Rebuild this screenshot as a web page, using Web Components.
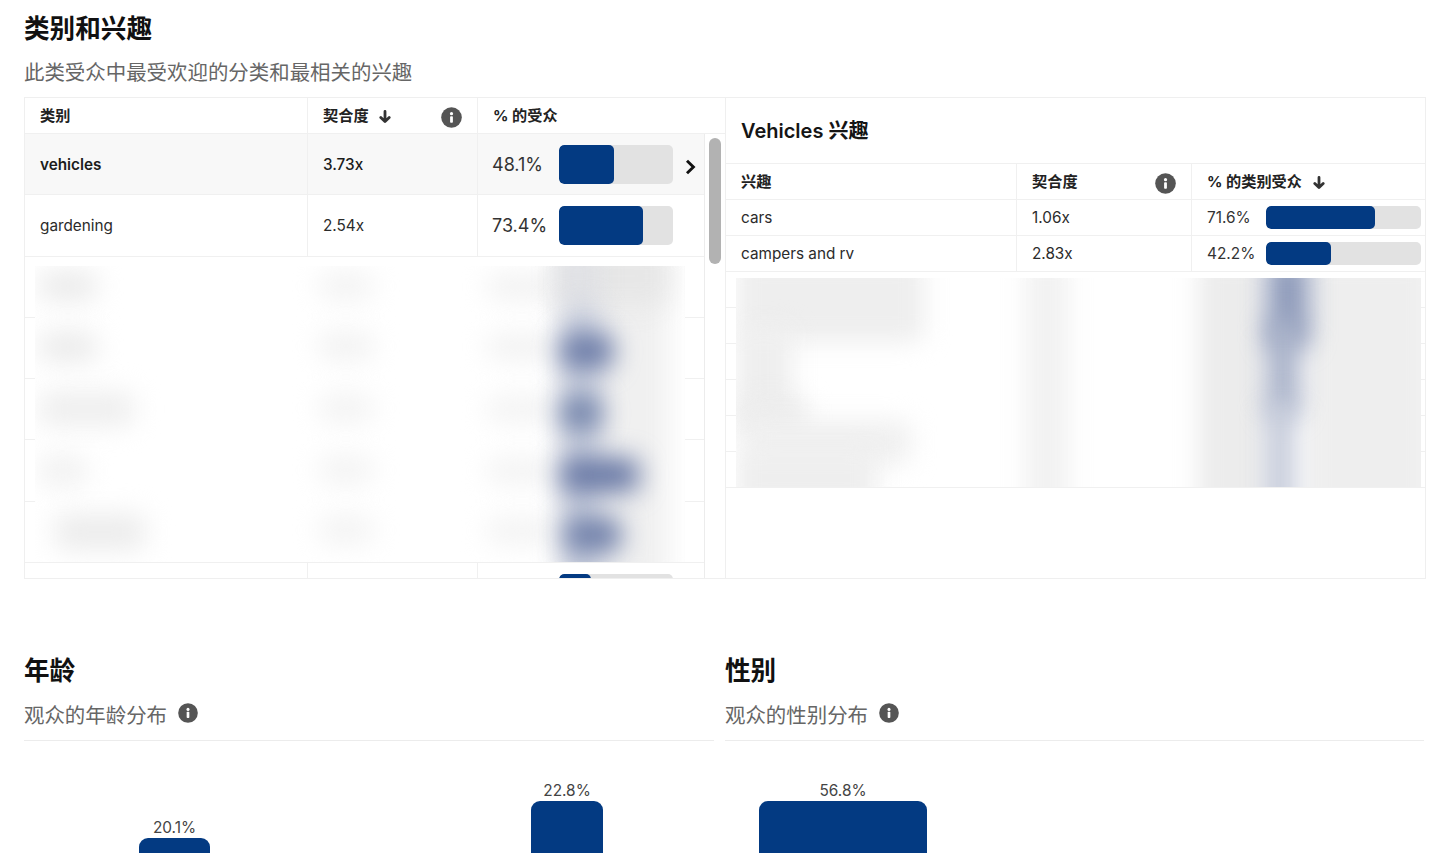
<!DOCTYPE html>
<html lang="zh-CN">
<head>
<meta charset="utf-8">
<title>类别和兴趣</title>
<style>
html,body{margin:0;padding:0;background:#fff;height:853px;overflow:hidden;font-family:Inter,"Noto Sans CJK SC",sans-serif;color:#222}
</style>
</head>
<body>
<audience-page>
  <section-head slot="top" heading="类别和兴趣" sub="此类受众中最受欢迎的分类和最相关的兴趣"></section-head>
  <split-card slot="top">
    <data-panel slot="left" style="--cols:283px 170px 1fr">
      <table-row head><table-cell>类别</table-cell><table-cell>契合度 <sort-arrow></sort-arrow><info-icon end></info-icon></table-cell><table-cell>% 的受众</table-cell></table-row>
      <table-row tall selected><table-cell strong>vehicles</table-cell><table-cell medium>3.73x</table-cell><table-cell tight><bar-meter large value="48.1%" pct="48.1"></bar-meter><chevron-mark></chevron-mark></table-cell></table-row>
      <table-row tall><table-cell>gardening</table-cell><table-cell>2.54x</table-cell><table-cell tight><bar-meter large value="73.4%" pct="73.4"></bar-meter></table-cell></table-row>
      <table-row tall></table-row><table-row tall></table-row><table-row tall></table-row><table-row tall></table-row><table-row tall></table-row>
      <table-row tall><table-cell></table-cell><table-cell></table-cell><table-cell tight><bar-meter large value="" pct="28"></bar-meter></table-cell></table-row>
    </data-panel>
    <blur-mask slot="left" kind="left"></blur-mask>
    <data-panel slot="right" titled="Vehicles 兴趣" style="--cols:291px 175px 1fr">
      <table-row head><table-cell>兴趣</table-cell><table-cell>契合度<info-icon end></info-icon></table-cell><table-cell>% 的类别受众 <sort-arrow></sort-arrow></table-cell></table-row>
      <table-row><table-cell>cars</table-cell><table-cell>1.06x</table-cell><table-cell><bar-meter value="71.6%" pct="70.3"></bar-meter></table-cell></table-row>
      <table-row><table-cell>campers and rv</table-cell><table-cell>2.83x</table-cell><table-cell><bar-meter value="42.2%" pct="42"></bar-meter></table-cell></table-row>
      <table-row></table-row><table-row></table-row><table-row></table-row><table-row></table-row><table-row></table-row><table-row></table-row>
    </data-panel>
    <blur-mask slot="right" kind="right"></blur-mask>
  </split-card>
  <chart-section slot="left" heading="年龄" sub="观众的年龄分布" pad="115" gap="321">
    <chart-bar value="20.1%" w="71" h="15"></chart-bar>
    <chart-bar value="22.8%" w="72" h="52"></chart-bar>
  </chart-section>
  <chart-section slot="right" heading="性别" sub="观众的性别分布" pad="34" gap="0">
    <chart-bar value="56.8%" w="168" h="52"></chart-bar>
  </chart-section>
</audience-page>
<script>
const def=(n,css,html)=>{customElements.define(n,class extends HTMLElement{
  constructor(){super();const r=this.attachShadow({mode:'open'});r.innerHTML=`<style>${css}</style>${typeof html==='function'?'':html}`;}
  connectedCallback(){if(typeof html==='function'){const d=document.createElement('div');d.style.display='contents';d.innerHTML=html(this);this.shadowRoot.appendChild(d);}}
});};
const attr=(e,a)=>e.getAttribute(a)||'';

def('audience-page',`
:host{display:block;padding:0 14px 0 24px}
.cols{display:grid;grid-template-columns:690px 699px;column-gap:11px;margin-top:74px}
`,`<slot name="top"></slot><div class="cols"><div><slot name="left"></slot></div><div><slot name="right"></slot></div></div>`);

def('section-head',`
:host{display:block}
h2{margin:0;font-size:25.6px;line-height:36px;font-weight:700;color:#111;padding-top:11px}
p{margin:11px 0 0;padding-bottom:9px;font-size:20.45px;line-height:30px;color:#666;font-weight:400}
`,h=>`<h2>${attr(h,'heading')}</h2><p>${attr(h,'sub')}</p>`);

def('info-icon',`
:host{display:inline-flex;width:21px;height:21px;flex:none;vertical-align:middle}
:host([end]){margin-left:auto;position:relative;top:3px}
svg{display:block;width:100%;height:100%}
`,`<svg viewBox="0 0 21 21"><circle cx="10.5" cy="10.5" r="10.3" fill="#555"/><circle cx="10.5" cy="6.7" r="1.6" fill="#fff"/><rect x="9.1" y="9.2" width="2.8" height="6.6" rx=".8" fill="#fff"/></svg>`);

def('sort-arrow',`
:host{display:inline-flex;width:12px;height:14px;margin-left:7px;position:relative;top:3px}
svg{display:block;width:100%;height:100%}
`,`<svg viewBox="0 0 12 14"><path d="M6 1.5V11.5M1.8 7.4 6 11.6l4.2-4.2" fill="none" stroke="#333" stroke-width="2.8" stroke-linecap="round" stroke-linejoin="round"/></svg>`);

def('chevron-mark',`
:host{display:inline-flex;width:11px;height:16px;margin-left:12px;position:relative;top:3px}
svg{display:block;width:100%;height:100%}
`,`<svg viewBox="0 0 11 16"><path d="M2 1.8 8.4 8 2 14.2" fill="none" stroke="#111" stroke-width="2.9" stroke-linejoin="miter"/></svg>`);

def('bar-meter',`
:host{display:flex;align-items:center;font-size:15.4px;color:#333}
.v{width:59px;flex:none}
.t{width:155px;height:23px;border-radius:5px;background:#e2e2e2;overflow:hidden;flex:none}
.f{height:100%;background:#033a82;border-radius:5px}
:host([large]){font-size:18px}
:host([large]) .v{width:67px}
:host([large]) .t{width:114px;height:39px}
`,h=>`<span class="v">${attr(h,'value')}</span><div class="t"><div class="f" style="width:${attr(h,'pct')}%"></div></div>`);

def('table-cell',`
:host{display:flex;align-items:center;min-width:0;padding:0 15px;border-right:1px solid #f0f0f0;font-size:15.3px;color:#2b2b2b;white-space:pre}
:host(:last-child){border-right:0}
:host([tight]){padding-left:14px}
:host([strong]){font-weight:600;color:#1c1c1c}
:host([medium]){font-weight:500;color:#1c1c1c}
`,`<slot></slot>`);

def('table-row',`
:host{display:grid;grid-template-columns:var(--cols);height:35px;border-bottom:1px solid #f0f0f0;box-sizing:content-box}
:host([tall]){height:60.3px}
:host([selected]){background:#f8f8f8}
:host([head]) ::slotted(table-cell){font-weight:700;font-size:15.2px;color:#222;padding-bottom:3px;box-sizing:border-box}
`,`<slot></slot>`);

def('data-panel',`
:host{display:flex;flex-direction:column;height:100%;overflow:hidden;background:#fff}
.t{margin:0;height:66px;display:flex;align-items:center;padding:0 15px 2px;box-sizing:border-box;font-size:20px;font-weight:600;color:#151515;border-bottom:1px solid #f0f0f0;flex:none}
.body{flex:1;min-height:0;position:relative;overflow:hidden}
`,h=>h.hasAttribute('titled')?`<h3 class="t">${attr(h,'titled')}</h3><div class="body"><slot></slot></div>`:`<div class="body"><slot></slot></div>`);

def('split-card',`
:host{display:grid;grid-template-columns:701px 701px;height:482px;box-sizing:border-box;width:1402px}
.side{position:relative;min-width:0;height:482px;overflow:hidden;box-sizing:border-box;border:1px solid #efefef;border-right:0}
.side.r{border-right:1px solid #efefef}
.scroll{position:absolute;top:36px;right:0;bottom:0;width:21px;background:#fff;border-left:1px solid #ececec;box-sizing:border-box}
.scroll i{position:absolute;left:4px;top:4px;width:12px;height:126px;border-radius:6px;background:#b2b2b2;display:block}
`,`<div class="side"><slot name="left"></slot><div class="scroll"><i></i></div></div><div class="side r"><slot name="right"></slot></div>`);

const blobs={
 left:[[4,5,58,30,'#ebebeb'],[4,66,58,30,'#ebebeb'],[4,126,95,34,'#eeeeee'],[4,190,48,30,'#f1f1f1'],[20,248,90,36,'#ececec'],
  [284,6,54,28,'#f3f3f3'],[284,66,54,28,'#f2f2f2'],[284,128,54,28,'#f3f3f3'],[284,190,54,28,'#f3f3f3'],[284,250,54,28,'#f3f3f3'],
  [452,8,70,26,'#f2f2f2'],[452,68,70,26,'#f2f2f2'],[452,130,70,26,'#f3f3f3'],[452,192,70,26,'#f3f3f3'],[452,252,70,26,'#f3f3f3'],
  [525,-20,108,340,'#f0f0f0'],[525,-20,108,60,'#e7e7e7'],[522,-20,42,60,'#e0e1e5'],[528,40,36,280,'#c6ccdc'],
  [526,68,52,34,'#6a7aa6'],[526,130,40,34,'#7283aa'],[526,192,78,34,'#6777a4'],[530,252,56,34,'#6e7ea8']],
 right:[[0,-20,188,84,'#eeeeee'],[0,50,56,90,'#eeeeee'],[0,120,70,40,'#ececec'],[10,142,165,44,'#f0f0f0'],[0,170,140,60,'#eeeeee'],
  [290,-20,42,260,'#f1f1f1'],
  [462,-20,70,260,'#ececec'],[570,-20,126,260,'#eeeeee'],[530,-20,44,90,'#909cbb'],[530,40,34,100,'#a8b1c8'],[530,120,28,120,'#c2c8d8']]
};
customElements.define('blur-mask',class extends HTMLElement{
  constructor(){super();this.attachShadow({mode:'open'});}
  connectedCallback(){
    const k=attr(this,'kind'),L=k==='left';
    this.shadowRoot.innerHTML=`<style>
    :host{position:absolute;background:#fff;overflow:hidden;display:block;
      ${L?'left:10px;top:168px;width:650px;height:296px':'left:10px;top:180px;width:685px;height:209px'}}
    i{position:absolute;display:block;filter:blur(${L?13:12}px);border-radius:10px}
    </style>`+blobs[k].map(b=>`<i style="left:${b[0]}px;top:${b[1]}px;width:${b[2]}px;height:${b[3]}px;background:${b[4]}"></i>`).join('');
  }
});

def('chart-bar',`
:host{display:flex;flex-direction:column;align-items:center;flex:none}
.v{font-size:15.4px;line-height:20px;color:#444}
.b{background:#033a82;border-radius:9px 9px 0 0;margin-top:1px}
`,h=>`<span class="v" style="position:relative;top:1px">${attr(h,'value')}</span><div class="b" style="width:${attr(h,'w')}px;height:${attr(h,'h')}px"></div>`);

def('chart-section',`
:host{display:block}
h2{margin:0;font-size:25.6px;line-height:36px;font-weight:700;color:#111}
.sub{display:flex;align-items:center;gap:11px;margin:12px 0 0;font-size:20.45px;line-height:30px;color:#666;height:30px}
.rule{border-bottom:1px solid #ececec;padding-bottom:9px}
.chart{display:flex;align-items:flex-end;height:112px;overflow:hidden}
`,h=>`<h2>${attr(h,'heading')}</h2><div class="rule"><p class="sub"><span>${attr(h,'sub')}</span><info-icon style="position:relative;top:-3px;width:20px;height:20px"></info-icon></p></div><div class="chart" style="padding-left:${attr(h,'pad')}px;gap:${attr(h,'gap')}px"><slot></slot></div>`);
</script>
</body>
</html>
